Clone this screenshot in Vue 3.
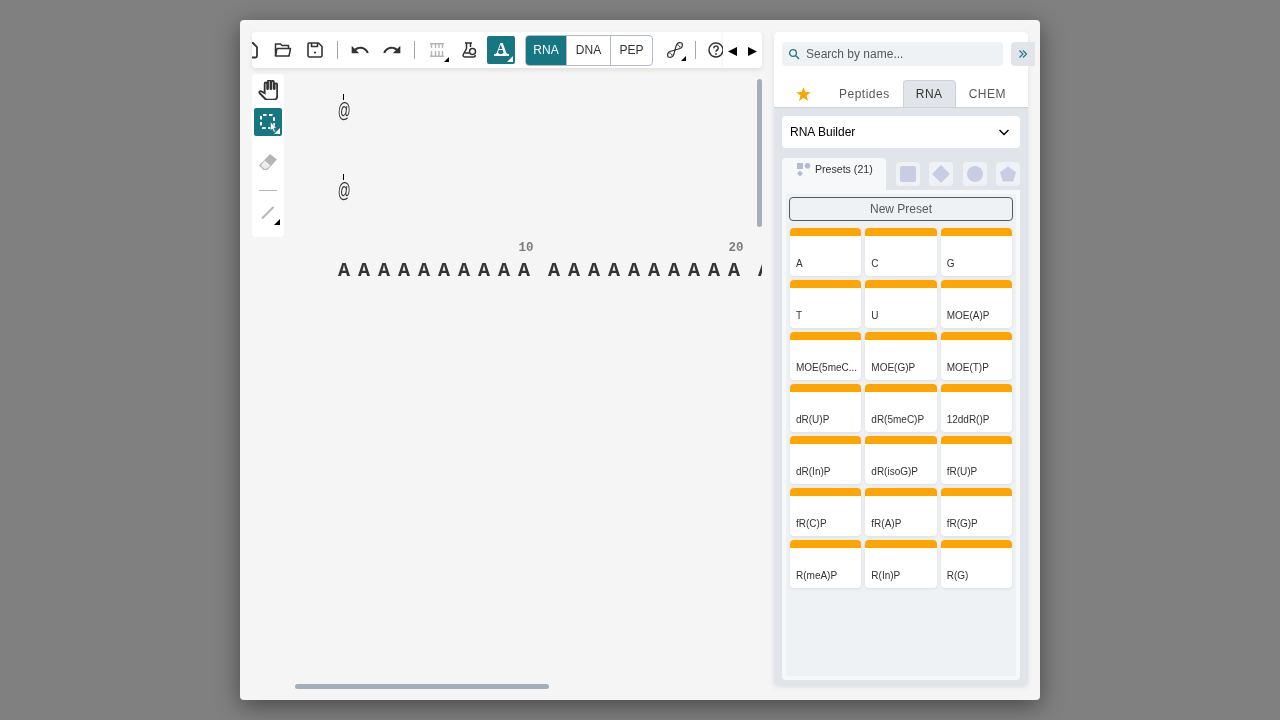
<template>
    <div class="backdrop">
        <div class="editor">
            <div class="left-col">
                <!-- Top toolbar -->
                <div class="toolbar">
                    <div class="toolbar-scroll">
                        <span class="tool">
                            <svg width="20" height="20" viewBox="0 0 20 20" fill="none" stroke="#333" stroke-width="1.800">
                                <path d="M5 3h7l4 4v9a1.500 1.500 0 0 1-1.500 1.500h-9A1.500 1.500 0 0 1 4 16V4" />
                            </svg>
                        </span>
                        <span class="tool">
                            <svg width="20" height="20" viewBox="0 0 20 20" fill="none" stroke="#333" stroke-width="1.500" stroke-linejoin="round">
                                <path d="M2.500 16V4h5l1.500 1.500h6.500v2.500" />
                                <path d="M2.500 16l1.500-7.500h13.500L16 16z" />
                            </svg>
                        </span>
                        <span class="tool">
                            <svg width="20" height="20" viewBox="0 0 20 20" fill="none" stroke="#333" stroke-width="1.600" stroke-linejoin="round">
                                <path d="M4 3h9.500L17 6.500V15.500a1.500 1.500 0 0 1-1.500 1.500h-11A1.500 1.500 0 0 1 3 15.500V4a1 1 0 0 1 1-1z" />
                                <path d="M6.500 3v3.500h6V3" />
                                <circle cx="10" cy="12.500" r="1.100" fill="#333" stroke="none" />
                            </svg>
                        </span>
                        <span class="sep"></span>
                        <span class="tool">
                            <svg width="20" height="20" viewBox="0 0 24 24" fill="#333">
                                <path d="M12.500 8c-2.650 0-5.050.99-6.900 2.600L2 7v9h9l-3.620-3.620c1.390-1.160 3.160-1.880 5.120-1.880 3.540 0 6.550 2.310 7.600 5.500l2.370-.78C21.080 11.030 17.150 8 12.500 8z" />
                            </svg>
                        </span>
                        <span class="tool">
                            <svg class="flip" width="20" height="20" viewBox="0 0 24 24" fill="#333">
                                <path d="M12.500 8c-2.650 0-5.050.99-6.900 2.600L2 7v9h9l-3.620-3.620c1.390-1.160 3.160-1.880 5.120-1.880 3.540 0 6.550 2.310 7.600 5.500l2.370-.78C21.080 11.030 17.150 8 12.500 8z" />
                            </svg>
                        </span>
                        <span class="sep"></span>
                        <span class="tool tool-seq corner">
                            <svg width="20" height="20" viewBox="0 0 20 20" fill="none" stroke="#b5b5b5" stroke-width="1.400">
                                <path d="M3 3.700h14M3 16.300h14M4.500 3.500V8M8.500 3.500V8M12 3.500V8M15.500 3.500V8M4.500 11v5.500M8.500 11v5.500M12 11v5.500M15.500 11v5.500" />
                            </svg>
                        </span>
                        <span class="tool">
                            <svg width="20" height="20" viewBox="0 0 20 20" fill="none" stroke="#333" stroke-width="1.500" stroke-linejoin="round">
                                <path d="M6 3h7M7.500 3v5.500L4.300 14.500c-.7 1.300.1 2.500 1.400 2.500h8.800c1.200 0 1.900-.8 1.700-2" />
                                <path d="M11.500 3v4" />
                                <path d="M5.500 13h5" />
                                <circle cx="13.500" cy="11.500" r="3" />
                            </svg>
                        </span>
                        <span class="tool-active tool-a">
                            <span class="a-letter">A</span>
                            <span class="a-line"></span>
                        </span>
                        <div class="mode-group">
                            <span class="mode selected">RNA</span>
                            <span class="mode">DNA</span>
                            <span class="mode">PEP</span>
                        </div>
                        <span class="tool tool-helix corner">
                            <svg width="20" height="20" viewBox="0 0 20 20" fill="none" stroke="#333" stroke-width="1.200">
                                <path d="M3 17C1 11 7 11 10 10c3-1 9-1 7-7" />
                                <path d="M3 17c6 2 6-4 7-7s1-9 7-7" />
                                <path d="M4.500 12.500l3 3M12.500 4.500l3 3" stroke-dasharray="1.500 1" />
                            </svg>
                        </span>
                        <span class="sep sep-help"></span>
                        <span class="tool">
                            <svg width="20" height="20" viewBox="0 0 20 20" fill="none" stroke="#333" stroke-width="1.500">
                                <circle cx="10" cy="10" r="7" />
                                <path d="M7.800 8.200a2.200 2.200 0 1 1 3.400 1.800c-.8.500-1.200.9-1.200 1.800" />
                                <circle cx="10" cy="14" r=".9" fill="#333" stroke="none" />
                            </svg>
                        </span>
                    </div>
                    <div class="arrows">
                        <svg width="9" height="9" viewBox="0 0 9 9"><path d="M9 0v9L0 4.500z" fill="#000" /></svg>
                        <svg width="9" height="9" viewBox="0 0 9 9"><path d="M0 0v9l9-4.500z" fill="#000" /></svg>
                    </div>
                </div>

                <div class="work-row">
                    <!-- Left tools -->
                    <div class="side-tools">
                        <span class="side-tool">
                            <svg width="20" height="20" viewBox="0 0 24 24" fill="#fff" stroke="#333" stroke-width="2.200">
                                <path d="M21.500 4c-.83 0-1.500.67-1.500 1.500v5c0 .28-.22.5-.5.5s-.5-.22-.5-.5v-8c0-.83-.67-1.500-1.500-1.500S16 1.670 16 2.500v8c0 .28-.22.5-.5.5s-.5-.22-.5-.5v-9c0-.83-.67-1.500-1.500-1.500S12 .67 12 1.500v8.990c0 .28-.22.5-.5.5s-.5-.22-.5-.5V4.500c0-.83-.67-1.500-1.500-1.500S8 3.670 8 4.500v11.410l-4.120-2.350c-.58-.33-1.300-.24-1.780.22-.6.58-.62 1.540-.04 2.130l6.780 6.890c.57.58 1.350.9 2.160.9H19c2.210 0 4-1.790 4-4V5.500c0-.83-.67-1.500-1.500-1.500z" />
                            </svg>
                        </span>
                        <span class="side-tool active">
                            <svg width="28" height="28" viewBox="0 0 28 28" fill="none">
                                <rect x="7" y="7" width="13" height="13" rx="2" stroke="#fff" stroke-width="2" stroke-dasharray="3.500 2.500" />
                                <path d="M16.500 14l6 6-2.600.3 1.500 3.200-1.600.7-1.400-3.200-2 1.600z" fill="#fff" stroke="#167782" stroke-width=".6" />
                                <path d="M26 20v6h-6z" fill="#fff" />
                            </svg>
                        </span>
                        <span class="side-tool eraser">
                            <svg width="22" height="22" viewBox="0 0 22 22">
                                <path d="M13 3l7 5.500-9.500 10.500H6.500L2 14.500z" fill="#b5b5b5" />
                                <path d="M7.500 9.500l6 5-3.500 3.200H7L3.800 14.500z" fill="#ececec" />
                            </svg>
                        </span>
                        <span class="side-sep"></span>
                        <span class="side-tool line-tool">
                            <svg width="28" height="28" viewBox="0 0 28 28" fill="none">
                                <path d="M8 19.500L19.500 8" stroke="#b5b5b5" stroke-width="2" />
                                <path d="M26 20v6h-6z" fill="#000" />
                            </svg>
                        </span>
                    </div>

                    <!-- Canvas -->
                    <div class="canvas">
                        <span class="tick" style="top: 20px"></span>
                        <span class="at" style="top: 25px">@</span>
                        <span class="tick" style="top: 100px"></span>
                        <span class="at" style="top: 105px">@</span>

                        <div class="sequence">
                            <div v-for="(group, g) in seqGroups" :key="g" class="seq-group">
                                <span v-for="i in group" :key="i" class="seq-cell">
                                    <span v-if="i === 10" class="seq-num">{{ (g + 1) * 10 }}</span>
                                    A
                                </span>
                            </div>
                        </div>

                        <div class="vscroll"></div>
                    </div>
                </div>
                <div class="hscroll"></div>
            </div>

            <!-- Right library panel -->
            <div class="library">
                <div class="lib-head">
                    <div class="search-row">
                        <div class="search">
                            <svg width="12" height="12" viewBox="0 0 12 12" fill="none" stroke="#167782" stroke-width="1.300">
                                <circle cx="5" cy="5" r="3.400" />
                                <path d="M7.500 7.500L11 11" />
                            </svg>
                            <span>Search by name...</span>
                        </div>
                        <div class="expand">
                            <svg width="10" height="10" viewBox="0 0 10 10" fill="none" stroke="#167782" stroke-width="1.100">
                                <path d="M1.500 1.500L5 5 1.500 8.500M5 1.500L8.500 5 5 8.500" />
                            </svg>
                        </div>
                    </div>
                    <div class="tabs">
                        <span class="tab star-tab">
                            <svg width="15" height="14" viewBox="0 0 24 23"><path d="M12 0l3 8.300 9 .3-7.100 5.500 2.500 8.700L12 17.800l-7.400 5 2.500-8.700L0 8.600l9-.3z" fill="#faa500" /></svg>
                        </span>
                        <span class="tab">Peptides</span>
                        <span class="tab current">RNA</span>
                        <span class="tab">CHEM</span>
                    </div>
                </div>

                <div class="lib-body">
                    <div class="builder">
                        <span>RNA Builder</span>
                        <svg width="12" height="12" viewBox="0 0 12 12" fill="none" stroke="#000" stroke-width="1.400">
                            <path d="M1.500 4L6 8.500 10.500 4" />
                        </svg>
                    </div>

                    <div class="group-tabs">
                        <div class="presets-tab">
                            <svg width="14" height="14" viewBox="0 0 14 14" fill="#b4b9d6">
                                <rect x="0" y="0" width="6" height="6" />
                                <circle cx="10.500" cy="2.800" r="2.800" />
                                <path d="M3 7.500l3 3-3 3-3-3z" />
                            </svg>
                            <span class="presets-label">Presets (21)</span>
                        </div>
                        <div class="shape-tabs">
                            <span class="shape"><svg width="16" height="16" viewBox="0 0 16 16"><rect width="16" height="16" rx="2" fill="#c8cde2" /></svg></span>
                            <span class="shape"><svg width="18" height="18" viewBox="0 0 18 18"><path d="M9 0l8 8a1.400 1.400 0 0 1 0 2l-8 8-8-8a1.400 1.400 0 0 1 0-2z" fill="#c8cde2" /></svg></span>
                            <span class="shape"><svg width="16" height="16" viewBox="0 0 16 16"><circle cx="8" cy="8" r="8" fill="#c8cde2" /></svg></span>
                            <span class="shape"><svg width="16" height="16" viewBox="0 0 16 16"><path d="M8 .5l8 5.800-3 9.200H3L0 6.300z" fill="#c8cde2" /></svg></span>
                        </div>
                    </div>

                    <div class="presets-outer">
                        <div class="presets-inner">
                            <button class="new-preset">New Preset</button>
                            <div class="preset-grid">
                                <div v-for="p in presets" :key="p" class="preset-card">
                                    <div class="preset-top"></div>
                                    <div class="preset-name">{{ p }}</div>
                                </div>
                            </div>
                        </div>
                    </div>
                </div>
            </div>
        </div>
    </div>
</template>

<script setup>
// the third group runs off the canvas, only its first letter shows
const seqGroups = [10, 10, 1]

const presets = [
    'A', 'C', 'G',
    'T', 'U', 'MOE(A)P',
    'MOE(5meC...', 'MOE(G)P', 'MOE(T)P',
    'dR(U)P', 'dR(5meC)P', '12ddR()P',
    'dR(In)P', 'dR(isoG)P', 'fR(U)P',
    'fR(C)P', 'fR(A)P', 'fR(G)P',
    'R(meA)P', 'R(In)P', 'R(G)'
]
</script>

<style>
html,
body {
    margin: 0;
    background: #808080;
}
</style>

<style scoped>
.backdrop {
    width: 1280px;
    height: 720px;
    padding: 20px 240px;
    box-sizing: border-box;
    background: #808080;
    overflow: hidden;
    font-family: "Liberation Sans", sans-serif;
}

.editor {
    width: 800px;
    height: 680px;
    box-sizing: border-box;
    padding: 12px;
    background: #f5f5f5;
    border-radius: 4px;
    box-shadow: 0 6px 24px rgba(0, 0, 0, .45);
    display: flex;
    gap: 12px;
    align-items: flex-start;
    will-change: transform;
}

.left-col {
    width: 510px;
    height: 658px;
    display: flex;
    flex-direction: column;
    position: relative;
    flex-shrink: 0;
}

/* Toolbar */
.toolbar {
    height: 36px;
    background: #fff;
    border-radius: 4px;
    box-shadow: 0 2px 5px rgba(103, 104, 132, .15);
    position: relative;
    overflow: hidden;
    flex-shrink: 0;
}

.toolbar-scroll {
    display: flex;
    align-items: center;
    height: 36px;
    margin-left: -17px;
}

.tool {
    width: 32px;
    height: 28px;
    display: flex;
    align-items: center;
    justify-content: center;
    flex-shrink: 0;
    position: relative;
}

.flip {
    transform: scaleX(-1);
}

.sep {
    width: 1px;
    height: 18px;
    background: #a8a8a8;
    margin: 0 6px;
    flex-shrink: 0;
}

.corner::after {
    content: "";
    position: absolute;
    right: 4px;
    bottom: 2px;
    border-style: solid;
    border-width: 0 0 5px 5px;
    border-color: transparent transparent #000 transparent;
}

.tool-active {
    width: 28px;
    height: 28px;
    margin-left: 2px;
    background: #167782;
    border-radius: 2px;
    color: #fff;
    flex-shrink: 0;
    position: relative;
}

.tool-active::after {
    content: "";
    position: absolute;
    right: 2px;
    bottom: 2px;
    border-style: solid;
    border-width: 0 0 6px 6px;
    border-color: transparent transparent #fff transparent;
}

.a-letter {
    position: absolute;
    left: 7px;
    top: 3px;
    font: bold 16px/19px "Liberation Serif", serif;
    width: 15px;
    text-align: center;
}

.a-line {
    position: absolute;
    left: 7px;
    top: 18px;
    width: 15px;
    height: 2px;
    background: #fff;
}

.mode-group {
    display: flex;
    margin-left: 10px;
    flex-shrink: 0;
    font-size: 12px;
    color: #333;
    border: 1px solid #b4b9d6;
    border-radius: 4px;
    height: 29px;
    overflow: hidden;
}

.mode {
    display: flex;
    align-items: center;
    justify-content: center;
    width: 43px;
    border-left: 1px solid #b4b9d6;
}

.mode:last-child {
    width: 41px;
}

.mode.selected {
    width: 40px;
    border-left: 0;
    background: #167782;
    color: #fff;
}

.tool-helix {
    margin-left: 6px;
}

.tool-helix::after {
    right: 5px;
    bottom: 3px;
}

.sep-help {
    margin: 0 4px 0 4px;
}

.arrows {
    position: absolute;
    top: 0;
    right: 0;
    width: 39px;
    height: 36px;
    padding-top: 2px;
    box-sizing: border-box;
    background: #fff;
    display: flex;
    align-items: center;
    justify-content: center;
    gap: 11px;
    box-shadow: -1px 0 2px rgba(103, 104, 132, .08);
}

/* Work area */
.work-row {
    display: flex;
    flex: 1;
    margin-top: 6px;
    min-height: 0;
}

.side-tools {
    width: 32px;
    height: 163px;
    background: #fff;
    border-radius: 4px;
    display: flex;
    flex-direction: column;
    align-items: center;
    padding-top: 2px;
    box-sizing: border-box;
    flex-shrink: 0;
}

.side-tool {
    width: 28px;
    height: 28px;
    display: flex;
    align-items: center;
    justify-content: center;
    flex-shrink: 0;
}

.side-tool.active {
    background: #167782;
    border-radius: 2px;
    margin-top: 4px;
}

.eraser {
    margin-top: 12px;
}

.side-sep {
    width: 18px;
    height: 1px;
    background: #b5b5b5;
    margin-top: 14px;
}

.line-tool {
    margin-top: 8px;
}

.canvas {
    flex: 1;
    position: relative;
    overflow: hidden;
    min-width: 0;
}

.tick {
    position: absolute;
    left: 59px;
    width: 1px;
    height: 6px;
    background: #000;
}

.at {
    position: absolute;
    left: 44px;
    width: 32px;
    text-align: center;
    font: italic 20px/22px "Liberation Sans", sans-serif;
    color: #333;
    transform: scaleX(.64);
}

.sequence {
    position: absolute;
    left: 50px;
    top: 185px;
    display: flex;
    gap: 10px;
}

.seq-group {
    display: flex;
}

.seq-cell {
    width: 20px;
    position: relative;
    text-align: center;
    font: bold 20px/24px "Liberation Mono", monospace;
    color: #333;
    flex-shrink: 0;
}

.seq-num {
    position: absolute;
    left: 2px;
    right: -2px;
    top: -19px;
    font: bold 12.500px/16px "Liberation Mono", monospace;
    color: #7c7c7f;
    text-align: center;
}

.vscroll {
    position: absolute;
    right: 0;
    top: 5px;
    width: 5px;
    height: 148px;
    background: #a5afb9;
    border-radius: 3px;
}

.hscroll {
    position: absolute;
    left: 43px;
    top: 652px;
    width: 254px;
    height: 5px;
    background: #a5afb9;
    border-radius: 3px;
}

/* Library */
.library {
    width: 254px;
    height: 653px;
    flex-shrink: 0;
    display: flex;
    flex-direction: column;
    background: #e1e5ea;
    border-radius: 4px;
    box-shadow: 0 2px 5px rgba(103, 104, 132, .15);
}

.lib-head {
    background: #fff;
    border-radius: 4px 4px 0 0;
    height: 76px;
    box-sizing: border-box;
    padding-top: 10px;
    border-bottom: 1px solid #ccd2da;
    flex-shrink: 0;
}

.search-row {
    display: flex;
    padding-left: 8px;
    gap: 8px;
}

.search {
    width: 221px;
    height: 24px;
    background: #eff2f5;
    border-radius: 4px;
    display: flex;
    align-items: center;
    gap: 6px;
    padding-left: 6px;
    box-sizing: border-box;
    font-size: 12px;
    color: #585858;
    flex-shrink: 0;
}

.expand {
    width: 24px;
    height: 24px;
    background: #e1e5ea;
    border-radius: 4px 0 0 4px;
    display: flex;
    align-items: center;
    justify-content: center;
    flex-shrink: 0;
}

.tabs {
    display: flex;
    height: 27px;
    margin-top: 14px;
    padding-left: 8px;
}

.tab {
    display: flex;
    align-items: center;
    justify-content: center;
    padding: 0 13px;
    font-size: 12px;
    letter-spacing: .5px;
    color: #585858;
    flex-shrink: 0;
}

.star-tab {
    width: 42px;
    margin-right: 2px;
    padding: 0;
    box-sizing: border-box;
}

.tab.current {
    background: #e1e5ea;
    border: 1px solid #ccd2da;
    border-bottom: 0;
    border-radius: 4px 4px 0 0;
    color: #333;
    box-sizing: border-box;
    width: 53px;
    padding: 0;
}

.lib-body {
    flex: 1;
    padding: 8px 8px 5px;
    display: flex;
    flex-direction: column;
    min-height: 0;
}

.builder {
    height: 32px;
    background: #fff;
    border-radius: 4px;
    display: flex;
    align-items: center;
    justify-content: space-between;
    padding: 0 10px 0 8px;
    font-size: 12px;
    color: #000;
    flex-shrink: 0;
}

.group-tabs {
    display: flex;
    margin-top: 10px;
    height: 32px;
    flex-shrink: 0;
}

.presets-tab {
    width: 104px;
    background: #f6f8fa;
    border-radius: 4px 4px 0 0;
    display: flex;
    gap: 4px;
    padding: 5px 0 0 15px;
    box-sizing: border-box;
    font-size: 10.600px;
    color: #333;
    line-height: 14px;
}

.presets-label {
    margin-top: -1px;
}

.shape-tabs {
    display: flex;
    gap: 9.300px;
    margin: 4px 0 0 10px;
}

.shape {
    width: 24px;
    height: 24px;
    background: #eff2f5;
    border-radius: 4px;
    display: flex;
    align-items: center;
    justify-content: center;
}

.presets-outer {
    flex: 1;
    background: #f6f8fa;
    padding: 4px;
    border-radius: 0 0 4px 4px;
    min-height: 0;
}

.presets-inner {
    height: 100%;
    background: #eff2f5;
    padding: 3px 3px 0;
    box-sizing: border-box;
}

.new-preset {
    display: block;
    width: 224px;
    height: 24px;
    box-sizing: border-box;
    background: #eff2f5;
    border: 1px solid #585858;
    border-radius: 4px;
    font: 12px "Liberation Sans", sans-serif;
    color: #585858;
    padding: 0;
}

.preset-grid {
    display: grid;
    grid-template-columns: repeat(3, 1fr);
    gap: 4px;
    margin: 7px 1px 0;
}

.preset-card {
    height: 48px;
    background: #fff;
    border-radius: 4px;
    box-shadow: 0 1px 3px rgba(103, 104, 132, .15);
    overflow: hidden;
    min-width: 0;
}

.preset-top {
    height: 8px;
    background: #ffa500;
}

.preset-name {
    margin-top: 21px;
    padding: 0 2px 0 6px;
    font-size: 10px;
    line-height: 14px;
    color: #333;
    white-space: nowrap;
    overflow: hidden;
    text-overflow: ellipsis;
}
</style>
